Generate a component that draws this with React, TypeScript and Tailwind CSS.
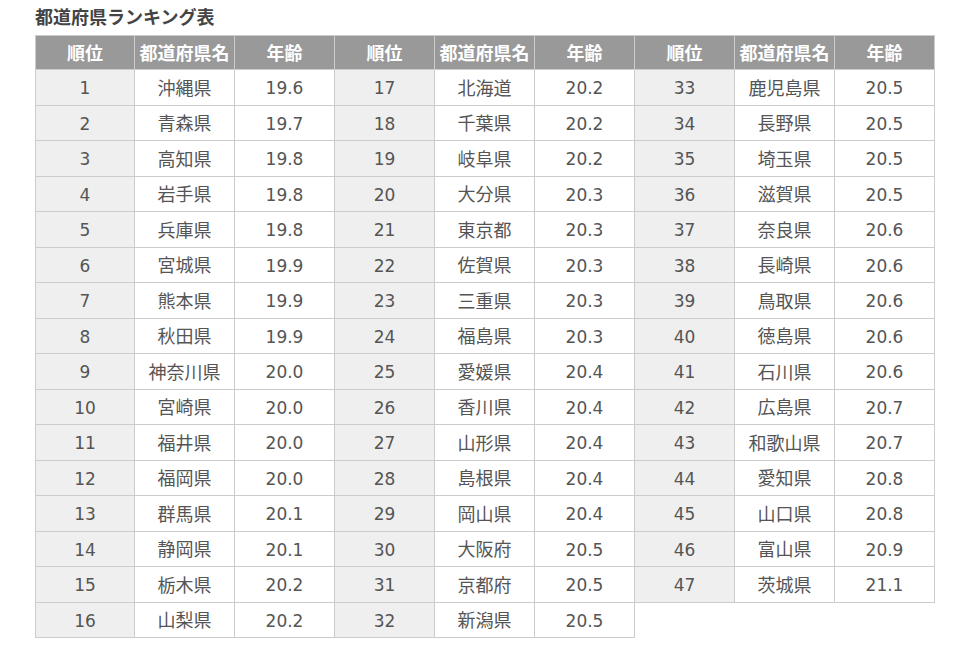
const data: [string, string][] = [
  ["沖縄県", "19.6"], ["青森県", "19.7"], ["高知県", "19.8"], ["岩手県", "19.8"],
  ["兵庫県", "19.8"], ["宮城県", "19.9"], ["熊本県", "19.9"], ["秋田県", "19.9"],
  ["神奈川県", "20.0"], ["宮崎県", "20.0"], ["福井県", "20.0"], ["福岡県", "20.0"],
  ["群馬県", "20.1"], ["静岡県", "20.1"], ["栃木県", "20.2"], ["山梨県", "20.2"],
  ["北海道", "20.2"], ["千葉県", "20.2"], ["岐阜県", "20.2"], ["大分県", "20.3"],
  ["東京都", "20.3"], ["佐賀県", "20.3"], ["三重県", "20.3"], ["福島県", "20.3"],
  ["愛媛県", "20.4"], ["香川県", "20.4"], ["山形県", "20.4"], ["島根県", "20.4"],
  ["岡山県", "20.4"], ["大阪府", "20.5"], ["京都府", "20.5"], ["新潟県", "20.5"],
  ["鹿児島県", "20.5"], ["長野県", "20.5"], ["埼玉県", "20.5"], ["滋賀県", "20.5"],
  ["奈良県", "20.6"], ["長崎県", "20.6"], ["鳥取県", "20.6"], ["徳島県", "20.6"],
  ["石川県", "20.6"], ["広島県", "20.7"], ["和歌山県", "20.7"], ["愛知県", "20.8"],
  ["山口県", "20.8"], ["富山県", "20.9"], ["茨城県", "21.1"],
];

const headers = ["順位", "都道府県名", "年齢"];

const App = () => {
  const cells = [];
  // header row
  for (let g = 0; g < 3; g++) {
    headers.forEach((h, i) => {
      cells.push(
        <div
          key={`h-${g}-${i}`}
          className={`flex items-center justify-center bg-[#999999] text-white text-[18px] font-bold font-['Noto_Sans_CJK_JP',sans-serif] border-t border-r border-b border-[#cccccc] ${g === 0 && i === 0 ? "border-l" : ""}`}
        >
          {h}
        </div>
      );
    });
  }
  // body rows
  for (let r = 0; r < 16; r++) {
    for (let g = 0; g < 3; g++) {
      const idx = g * 16 + r;
      if (idx >= data.length) {
        cells.push(<div key={`e-${r}-${g}-0`} />, <div key={`e-${r}-${g}-1`} />, <div key={`e-${r}-${g}-2`} />);
        continue;
      }
      const [name, age] = data[idx];
      cells.push(
        <div
          key={`r-${idx}`}
          className={`flex items-center justify-center pt-[3px] bg-[#efefef] border-r border-b border-[#cccccc] ${g === 0 ? "border-l" : ""}`}
        >
          {idx + 1}
        </div>,
        <div
          key={`n-${idx}`}
          className="flex items-center justify-center bg-white text-[18px] font-['Noto_Sans_CJK_JP',sans-serif] border-r border-b border-[#cccccc]"
        >
          {name}
        </div>,
        <div key={`a-${idx}`} className="flex items-center justify-center pt-[3px] bg-white border-r border-b border-[#cccccc]">
          {age}
        </div>
      );
    }
  }

  return (
    <div className="min-h-screen bg-white px-[35px] pt-[3px]">
      <h2 className="text-[18px] leading-[26px] font-bold text-[#444444] mb-[6px] font-['Noto_Sans_CJK_JP',sans-serif]">
        都道府県ランキング表
      </h2>
      <div className="grid grid-cols-[repeat(9,100px)] grid-rows-[35px_repeat(16,35.5px)] text-[17px] text-[#555555] font-['DejaVu_Sans','Noto_Sans_CJK_JP',sans-serif]">
        {cells}
      </div>
    </div>
  );
};

export default App;
